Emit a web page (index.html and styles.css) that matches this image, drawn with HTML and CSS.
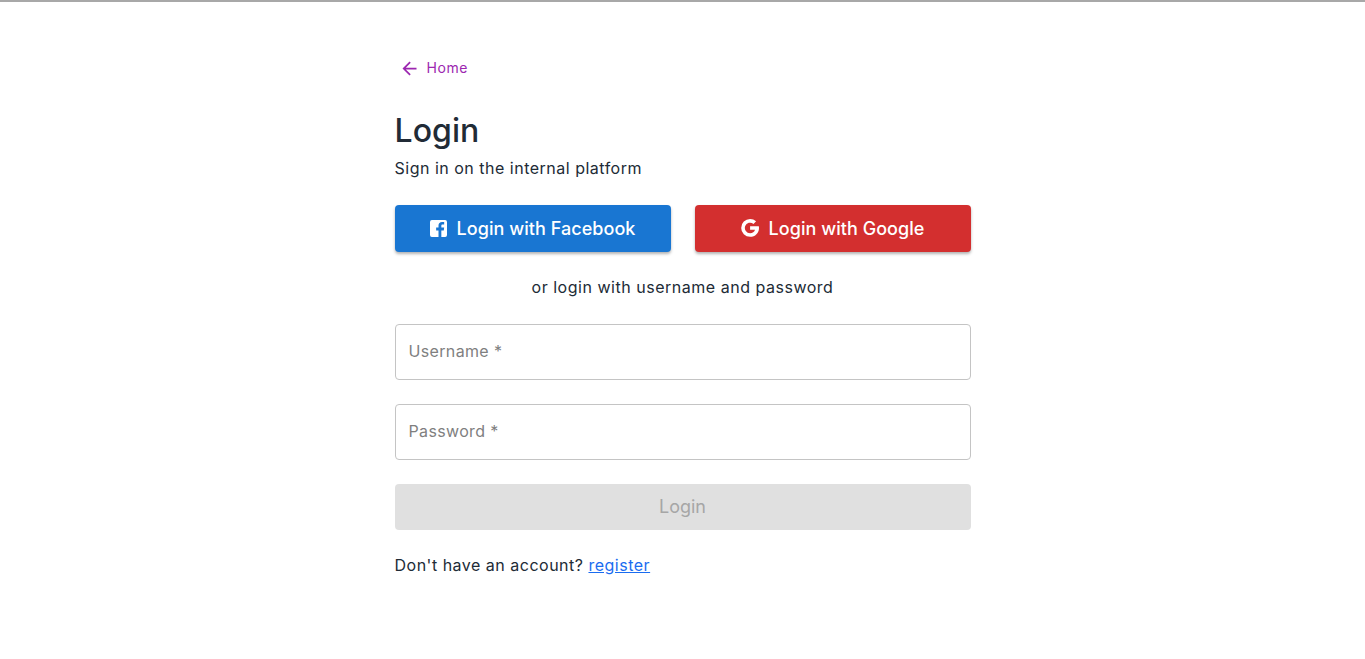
FILE: index.html
```html
<!DOCTYPE html>
<html lang="en">
  <head>
    <meta charset="UTF-8" />
    <meta name="viewport" content="width=device-width, initial-scale=1.0" />
    <title>Login</title>
    <link rel="stylesheet" href="styles.css">
  </head>
  <body>
    <div class="top-line"></div>
    <main class="login-page">
      <a class="home-link" href="#">
        <svg class="home-icon" viewBox="0 0 24 24"><path d="M20 11H7.830l5.590-5.590L12 4l-8 8 8 8 1.410-1.410L7.830 13H20v-2z"/></svg>
        <span class="home-text">Home</span>
      </a>

      <h1 class="title">Login</h1>
      <p class="subtitle">Sign in on the internal platform</p>

      <div class="social-row">
        <button class="btn social facebook" type="button">
          <svg class="social-icon fb-icon" viewBox="3 3 18 18"><path d="M5 3h14a2 2 0 0 1 2 2v14a2 2 0 0 1-2 2h-4v-7h2.600l.4-3h-3V9.200c0-.9.3-1.400 1.500-1.400H18V5.100c-.3 0-1.200-.1-2.200-.1-2.300 0-3.800 1.400-3.800 3.900V11H9.500v3H12v7H5a2 2 0 0 1-2-2V5a2 2 0 0 1 2-2z"/></svg>
          <span>Login with Facebook</span>
        </button>
        <button class="btn social google" type="button">
          <svg class="social-icon g-icon" viewBox="2.800 2.800 18.600 18.600"><path d="M12.200 10.300v3.600h5.100c-.7 2.200-2.600 3.500-5.100 3.500a5.400 5.400 0 1 1 3.500-9.500l2.700-2.700A9.200 9.200 0 0 0 12.200 2.800a9.200 9.200 0 1 0 0 18.400c5.300 0 9.200-3.700 9.200-9.100 0-.6-.1-1.200-.2-1.800h-9z"/></svg>
          <span>Login with Google</span>
        </button>
      </div>

      <p class="divider">or login with username and password</p>

      <form class="login-form">
        <input class="field" type="text" placeholder="Username *" />
        <input class="field" type="password" placeholder="Password *" />
        <button class="btn submit" type="submit" disabled>Login</button>
      </form>

      <p class="register">Don't have an account? <a href="#">register</a></p>
    </main>
  </body>
</html>
```

FILE: styles.css
```css
* {
  box-sizing: border-box;
}
body {
  margin: 0;
  background-color: #ffffff;
  color: #212b36;
  font-family: Inter, "Liberation Sans", sans-serif;
}
.top-line {
  height: 2px;
  background-color: #a8a8a8;
}
.login-page {
  width: 576px;
  margin: 0 auto;
  padding-top: 49px;
  display: flex;
  flex-direction: column;
}
.home-link {
  display: flex;
  align-items: center;
  height: 34px;
  padding-left: 4px;
  color: #9c27b0;
  text-decoration: none;
}
.home-icon {
  width: 21px;
  height: 21px;
  fill: #9c27b0;
}
.home-text {
  margin-left: 7px;
  padding-bottom: 1px;
  font-size: 14px;
  letter-spacing: 0.55px;
}
.title {
  margin: 26px 0 0;
  font-size: 32px;
  line-height: 40px;
  font-weight: 550;
  letter-spacing: 0.05px;
}
.subtitle {
  margin: 5px 0 0;
  font-size: 16px;
  line-height: 24px;
  letter-spacing: 0.5px;
}
.social-row {
  display: flex;
  gap: 24px;
  margin-top: 25px;
}
.btn {
  font-family: inherit;
  border: none;
  border-radius: 4px;
  font-size: 18px;
  font-weight: 500;
  padding: 0 0 1px;
}
.social {
  flex: 1;
  height: 47px;
  display: flex;
  align-items: center;
  justify-content: center;
  gap: 10px;
  color: #ffffff;
  box-shadow: 0 2px 3px rgba(0, 0, 0, 0.3);
  letter-spacing: 0.05px;
}
.facebook {
  background-color: #1976d2;
}
.google {
  background-color: #d32f2f;
}
.social-icon {
  fill: #ffffff;
}
.fb-icon {
  width: 17px;
  height: 17px;
}
.g-icon {
  width: 18px;
  height: 18px;
}
.divider {
  margin: 23px 0 0;
  text-align: center;
  font-size: 16px;
  line-height: 24px;
  letter-spacing: 0.52px;
}
.login-form {
  display: flex;
  flex-direction: column;
  gap: 24px;
  margin-top: 25px;
}
.field {
  height: 56px;
  padding: 0 13px 2px;
  border: 1px solid #c4c4c4;
  border-radius: 4px;
  font-family: inherit;
  font-size: 16px;
  letter-spacing: 0.35px;
}
.field::placeholder {
  color: #7f7f7f;
  opacity: 1;
}
.submit {
  height: 46px;
  background-color: #e0e0e0;
  color: #a6a6a6;
  font-weight: 400;
}
.register {
  margin: 23px 0 0;
  font-size: 16px;
  line-height: 24px;
  letter-spacing: 0.5px;
}
.register a {
  color: #1a6cf0;
}
```
